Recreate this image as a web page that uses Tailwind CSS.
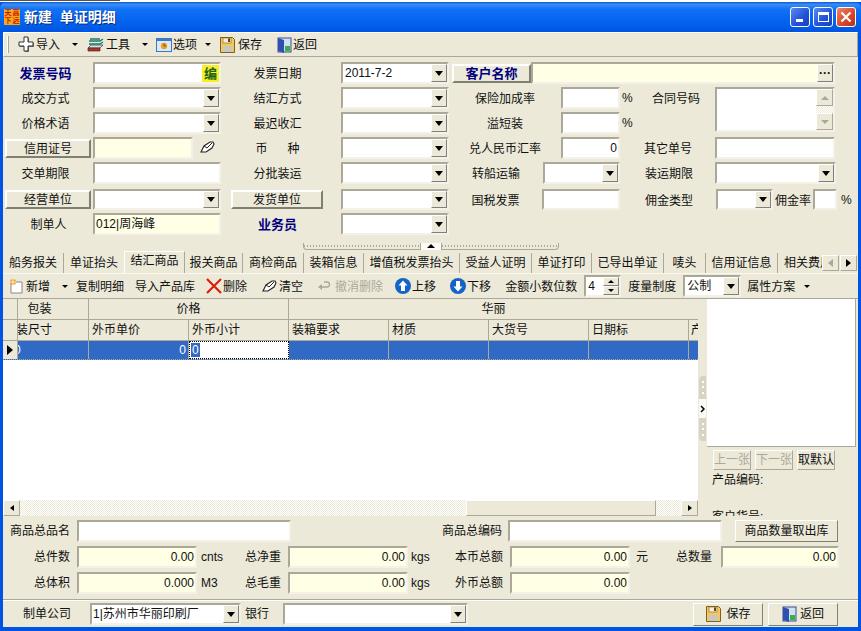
<!DOCTYPE html>
<html lang="en">
<head>
<meta charset="UTF-8" />
<script src="https://cdn.jsdelivr.net/npm/@tailwindcss/browser@4"></script>
</head>
<body class="m-0 bg-white">
<div class="w-[861px] h-[631px] overflow-hidden flex flex-col bg-[#0054e3] font-['Liberation_Sans','Noto_Sans_CJK_SC',sans-serif] text-[12px] leading-[14px] text-[#111]">
  <!-- desktop sliver above the window -->
  <div class="h-[2px] bg-white shrink-0"><div class="w-[120px] h-[1px] bg-[#555]"></div></div>

  <!-- title bar -->
  <div class="h-[30px] shrink-0 rounded-t-[6px] flex items-center pl-[4px] pr-[5px] bg-[linear-gradient(#0a5ad8_0%,#3a8cf5_8%,#1070f5_25%,#0868f0_50%,#0260ea_75%,#0054e3_100%)]">
    <div class="w-[16px] h-[16px] grid grid-cols-2 bg-[#f8a818] text-[#c81808] text-[7px] leading-[8px] text-center font-bold">
      <span>天</span><span>高</span><span>下</span><span>远</span>
    </div>
    <span class="ml-[4px] text-white font-bold text-[14px] [text-shadow:1px_1px_0_#0a2a80] whitespace-pre">新建  单证明细</span>
    <div class="ml-auto flex gap-[3px]">
      <div class="w-[20px] h-[20px] rounded-[3px] border border-white bg-[linear-gradient(135deg,#5a8cf0,#2050d8_60%,#1a40b8)] flex items-end pl-[5px] pb-[4px]"><div class="w-[7px] h-[3px] bg-white"></div></div>
      <div class="w-[20px] h-[20px] rounded-[3px] border border-white bg-[linear-gradient(135deg,#5a8cf0,#2050d8_60%,#1a40b8)] flex items-center justify-center"><div class="w-[11px] h-[10px] border border-t-[3px] border-white"></div></div>
      <div class="w-[20px] h-[20px] rounded-[3px] border border-white bg-[linear-gradient(135deg,#ec8a68,#d8452a_60%,#b83010)] flex items-center justify-center">
        <svg width="12" height="12" viewBox="0 0 12 12"><path d="M1.5 1.5l9 9M10.5 1.5l-9 9" stroke="#fff" stroke-width="2.2"/></svg>
      </div>
    </div>
  </div>

  <div class="flex-1 min-h-0 mx-[3px] bg-[#ece9d8] flex flex-col">
    <!-- main toolbar -->
    <div class="h-[25px] shrink-0 border border-t-white border-l-white border-r-[#aca899] border-b-[#aca899] flex items-center">
      <div class="ml-[3px] w-[2px] h-[17px] border-l border-r border-l-white border-r-[#aca899]"></div>
      <svg class="ml-[9px]" width="17" height="17" viewBox="0 0 17 17"><path d="M7 2h4v5h5v4h-5v5H7v-5H2V7h5z" fill="#777"/><path d="M6 1h4v5h5v4h-5v5H6v-5H1V6h5z" fill="#fff" stroke="#333"/></svg>
      <span class="ml-[1px]">导入</span>
      <div class="ml-[12px] border-x-[3px] border-t-[3px] border-x-transparent border-t-black"></div>
      <svg class="ml-[9px]" width="17" height="17" viewBox="0 0 17 17"><path d="M1 12l3-3h12l-3 3z" fill="#ddd" stroke="#333" stroke-width=".7"/><path d="M1 12h12v3H1z" fill="#b8302a" stroke="#333" stroke-width=".7"/><path d="M2 5h11l3-2M2 8h11l3-2M3 3h10" fill="none" stroke="#1a7a6a" stroke-width="1.300"/></svg>
      <span class="ml-[2px]">工具</span>
      <div class="ml-[12px] border-x-[3px] border-t-[3px] border-x-transparent border-t-black"></div>
      <svg class="ml-[8px]" width="16" height="14" viewBox="0 0 16 14"><rect x=".5" y=".5" width="15" height="13" fill="#dce8f8" stroke="#3a78c8"/><rect x="1" y="1" width="14" height="2" fill="#3a78c8"/><circle cx="8" cy="8" r="3.200" fill="#f0a020"/><path d="M8 5.500v2.500h2" stroke="#805010" fill="none"/></svg>
      <span class="ml-[1px]">选项</span>
      <div class="ml-[8px] border-x-[3px] border-t-[3px] border-x-transparent border-t-black"></div>
      <svg class="ml-[9px]" width="15" height="16" viewBox="0 0 15 16"><path d="M.5.500h12l2 2v13H.5z" fill="#f4c860" stroke="#806020"/><rect x="3" y="1" width="8" height="5" fill="#f8f0d0" stroke="#806020" stroke-width=".6"/><rect x="8" y="1.500" width="2" height="3.500" fill="#604810"/><rect x="3" y="9" width="9" height="6" fill="#c8c8c0"/></svg>
      <span class="ml-[3px]">保存</span>
      <svg class="ml-[15px]" width="15" height="16" viewBox="0 0 15 16"><rect x="1" y="1" width="13" height="14" fill="#cfe0f4" stroke="#34508c"/><path d="M1 1l6 2v13l-6-2z" fill="#3050b0"/><rect x="8" y="9" width="5" height="5" fill="#38b048"/></svg>
      <span class="ml-[1px]">返回</span>
    </div>

    <!-- form -->
    <div class="h-[183px] shrink-0 pt-[5px] flex flex-col">
      <!-- row 1 -->
      <div class="h-[25px] shrink-0 flex items-start">
        <span class="w-[85px] h-[22px] pt-[2px] flex items-center justify-center font-bold text-[13px] text-[#000080]">发票号码</span>
        <div class="ml-[5px] w-[128px] h-[22px] border-2 border-t-[#aca899] border-l-[#aca899] border-r-[#f4f2e8] border-b-[#f4f2e8] bg-white flex justify-end items-center">
          <span class="w-[17px] h-[17px] bg-[#f8f020] text-[13px] font-bold text-center leading-[17px] text-[#206020]">编</span>
        </div>
        <span class="w-[113px] h-[22px] pt-[2px] flex items-center justify-center">发票日期</span>
        <div class="ml-[7px] w-[108px] h-[22px] border-2 border-t-[#aca899] border-l-[#aca899] border-r-[#f4f2e8] border-b-[#f4f2e8] bg-white flex justify-between items-center pl-[2px]">
          2011-7-2
          <div class="w-[16px] h-[18px] border border-t-white border-l-white border-r-[#808080] border-b-[#808080] bg-[#ece9d8] flex items-center justify-center"><div class="border-x-[4px] border-t-[5px] border-x-transparent border-t-black"></div></div>
        </div>
        <div class="ml-[3px] mt-[2px] w-[79px] h-[19px] border-2 border-t-white border-l-white border-r-[#808070] border-b-[#808070] bg-[#ece9d8] flex items-center justify-center font-bold text-[13px] text-[#000080]">客户名称</div>
        <div class="w-[304px] h-[22px] border-2 border-t-[#aca899] border-l-[#aca899] border-r-[#f4f2e8] border-b-[#f4f2e8] bg-[#ffffe6] flex justify-end items-center">
          <div class="w-[16px] h-[18px] border border-t-white border-l-white border-r-[#808080] border-b-[#808080] bg-[#ece9d8] flex items-center justify-center font-bold leading-[8px]">···</div>
        </div>
      </div>
      <!-- row 2 -->
      <div class="h-[25px] shrink-0 flex items-start">
        <span class="w-[85px] h-[22px] pt-[2px] flex items-center justify-center">成交方式</span>
        <div class="ml-[5px] w-[128px] h-[22px] border-2 border-t-[#aca899] border-l-[#aca899] border-r-[#f4f2e8] border-b-[#f4f2e8] bg-white flex justify-end items-center">
          <div class="w-[16px] h-[18px] border border-t-white border-l-white border-r-[#808080] border-b-[#808080] bg-[#ece9d8] flex items-center justify-center"><div class="border-x-[4px] border-t-[5px] border-x-transparent border-t-black"></div></div>
        </div>
        <span class="w-[113px] h-[22px] pt-[2px] flex items-center justify-center">结汇方式</span>
        <div class="ml-[7px] w-[108px] h-[22px] border-2 border-t-[#aca899] border-l-[#aca899] border-r-[#f4f2e8] border-b-[#f4f2e8] bg-white flex justify-end items-center">
          <div class="w-[16px] h-[18px] border border-t-white border-l-white border-r-[#808080] border-b-[#808080] bg-[#ece9d8] flex items-center justify-center"><div class="border-x-[4px] border-t-[5px] border-x-transparent border-t-black"></div></div>
        </div>
        <span class="w-[112px] h-[22px] pt-[2px] flex items-center justify-center">保险加成率</span>
        <div class="w-[59px] h-[22px] border-2 border-t-[#aca899] border-l-[#aca899] border-r-[#f4f2e8] border-b-[#f4f2e8] bg-white"></div>
        <span class="ml-[2px] w-[30px] h-[22px] flex items-center">%</span>
        <span class="w-[48px] h-[22px] pt-[2px] flex items-center justify-center">合同号码</span>
        <!-- memo spans this row and the next -->
        <div class="ml-[15px] w-[120px] h-[45px] border-2 border-t-[#aca899] border-l-[#aca899] border-r-[#f4f2e8] border-b-[#f4f2e8] bg-white flex justify-end">
          <div class="w-[17px] flex flex-col bg-[repeating-conic-gradient(#ece9d8_0_25%,#fff_0_50%)] bg-[length:2px_2px]">
            <div class="h-[17px] border border-t-white border-l-white border-r-[#aca899] border-b-[#aca899] bg-[#ece9d8] flex items-center justify-center"><div class="border-x-[4px] border-b-[4px] border-x-transparent border-b-[#aca899]"></div></div>
            <div class="mt-auto h-[17px] border border-t-white border-l-white border-r-[#aca899] border-b-[#aca899] bg-[#ece9d8] flex items-center justify-center"><div class="border-x-[4px] border-t-[4px] border-x-transparent border-t-[#aca899]"></div></div>
          </div>
        </div>
      </div>
      <!-- row 3 -->
      <div class="h-[25px] shrink-0 flex items-start">
        <span class="w-[85px] h-[22px] pt-[2px] flex items-center justify-center">价格术语</span>
        <div class="ml-[5px] w-[128px] h-[22px] border-2 border-t-[#aca899] border-l-[#aca899] border-r-[#f4f2e8] border-b-[#f4f2e8] bg-white flex justify-end items-center">
          <div class="w-[16px] h-[18px] border border-t-white border-l-white border-r-[#808080] border-b-[#808080] bg-[#ece9d8] flex items-center justify-center"><div class="border-x-[4px] border-t-[5px] border-x-transparent border-t-black"></div></div>
        </div>
        <span class="w-[113px] h-[22px] pt-[2px] flex items-center justify-center">最迟收汇</span>
        <div class="ml-[7px] w-[108px] h-[22px] border-2 border-t-[#aca899] border-l-[#aca899] border-r-[#f4f2e8] border-b-[#f4f2e8] bg-white flex justify-end items-center">
          <div class="w-[16px] h-[18px] border border-t-white border-l-white border-r-[#808080] border-b-[#808080] bg-[#ece9d8] flex items-center justify-center"><div class="border-x-[4px] border-t-[5px] border-x-transparent border-t-black"></div></div>
        </div>
        <span class="w-[112px] h-[22px] pt-[2px] flex items-center justify-center">溢短装</span>
        <div class="w-[59px] h-[22px] border-2 border-t-[#aca899] border-l-[#aca899] border-r-[#f4f2e8] border-b-[#f4f2e8] bg-white"></div>
        <span class="ml-[2px] h-[22px] flex items-center">%</span>
      </div>
      <!-- row 4 -->
      <div class="h-[25px] shrink-0 flex items-start">
        <div class="ml-[2px] mt-[2px] w-[86px] h-[19px] border-2 border-t-white border-l-white border-r-[#808070] border-b-[#808070] bg-[#ece9d8] flex items-center justify-center">信用证号</div>
        <div class="ml-[2px] w-[100px] h-[22px] border-2 border-t-[#aca899] border-l-[#aca899] border-r-[#f4f2e8] border-b-[#f4f2e8] bg-[#ffffe6]"></div>
        <svg class="ml-[7px] mt-[4px]" width="15" height="13" viewBox="0 0 15 13"><path d="M1 11l3-6 6-4h3l1 2-2 4-6 4z" fill="#fff" stroke="#222" stroke-width="1.100"/><path d="M4 5l3 2 5-5" fill="none" stroke="#222"/></svg>
        <span class="ml-[6px] w-[113px] h-[22px] pt-[2px] flex items-center justify-center whitespace-pre">币      种</span>
        <div class="ml-[7px] w-[108px] h-[22px] border-2 border-t-[#aca899] border-l-[#aca899] border-r-[#f4f2e8] border-b-[#f4f2e8] bg-white flex justify-end items-center">
          <div class="w-[16px] h-[18px] border border-t-white border-l-white border-r-[#808080] border-b-[#808080] bg-[#ece9d8] flex items-center justify-center"><div class="border-x-[4px] border-t-[5px] border-x-transparent border-t-black"></div></div>
        </div>
        <span class="w-[112px] h-[22px] pt-[2px] flex items-center justify-center">兑人民币汇率</span>
        <div class="w-[59px] h-[22px] border-2 border-t-[#aca899] border-l-[#aca899] border-r-[#f4f2e8] border-b-[#f4f2e8] bg-white flex items-center justify-end pr-[1px]">0</div>
        <span class="ml-[24px] w-[48px] h-[22px] pt-[2px] flex items-center justify-center">其它单号</span>
        <div class="ml-[23px] w-[120px] h-[22px] border-2 border-t-[#aca899] border-l-[#aca899] border-r-[#f4f2e8] border-b-[#f4f2e8] bg-white"></div>
      </div>
      <!-- row 5 -->
      <div class="h-[27px] shrink-0 flex items-start">
        <span class="w-[85px] h-[22px] pt-[2px] flex items-center justify-center">交单期限</span>
        <div class="ml-[5px] w-[128px] h-[22px] border-2 border-t-[#aca899] border-l-[#aca899] border-r-[#f4f2e8] border-b-[#f4f2e8] bg-white"></div>
        <span class="w-[113px] h-[22px] pt-[2px] flex items-center justify-center">分批装运</span>
        <div class="ml-[7px] w-[108px] h-[22px] border-2 border-t-[#aca899] border-l-[#aca899] border-r-[#f4f2e8] border-b-[#f4f2e8] bg-white flex justify-end items-center">
          <div class="w-[16px] h-[18px] border border-t-white border-l-white border-r-[#808080] border-b-[#808080] bg-[#ece9d8] flex items-center justify-center"><div class="border-x-[4px] border-t-[5px] border-x-transparent border-t-black"></div></div>
        </div>
        <span class="w-[94px] h-[22px] pt-[2px] flex items-center justify-center">转船运输</span>
        <div class="w-[77px] h-[22px] border-2 border-t-[#aca899] border-l-[#aca899] border-r-[#f4f2e8] border-b-[#f4f2e8] bg-white flex justify-end items-center">
          <div class="w-[16px] h-[18px] border border-t-white border-l-white border-r-[#808080] border-b-[#808080] bg-[#ece9d8] flex items-center justify-center"><div class="border-x-[4px] border-t-[5px] border-x-transparent border-t-black"></div></div>
        </div>
        <span class="ml-[25px] w-[48px] h-[22px] pt-[2px] flex items-center justify-center">装运期限</span>
        <div class="ml-[22px] w-[121px] h-[22px] border-2 border-t-[#aca899] border-l-[#aca899] border-r-[#f4f2e8] border-b-[#f4f2e8] bg-white flex justify-end items-center">
          <div class="w-[16px] h-[18px] border border-t-white border-l-white border-r-[#808080] border-b-[#808080] bg-[#ece9d8] flex items-center justify-center"><div class="border-x-[4px] border-t-[5px] border-x-transparent border-t-black"></div></div>
        </div>
      </div>
      <!-- row 6 -->
      <div class="h-[24px] shrink-0 flex items-start">
        <div class="ml-[2px] mt-[1px] w-[86px] h-[19px] border-2 border-t-white border-l-white border-r-[#808070] border-b-[#808070] bg-[#ece9d8] flex items-center justify-center">经营单位</div>
        <div class="ml-[2px] w-[128px] h-[21px] border-2 border-t-[#aca899] border-l-[#aca899] border-r-[#f4f2e8] border-b-[#f4f2e8] bg-white flex justify-end items-center">
          <div class="w-[16px] h-[17px] border border-t-white border-l-white border-r-[#808080] border-b-[#808080] bg-[#ece9d8] flex items-center justify-center"><div class="border-x-[4px] border-t-[5px] border-x-transparent border-t-black"></div></div>
        </div>
        <div class="ml-[10px] mt-[1px] w-[92px] h-[19px] border-2 border-t-white border-l-white border-r-[#808070] border-b-[#808070] bg-[#ece9d8] flex items-center justify-center">发货单位</div>
        <div class="ml-[18px] w-[108px] h-[21px] border-2 border-t-[#aca899] border-l-[#aca899] border-r-[#f4f2e8] border-b-[#f4f2e8] bg-white flex justify-end items-center">
          <div class="w-[16px] h-[17px] border border-t-white border-l-white border-r-[#808080] border-b-[#808080] bg-[#ece9d8] flex items-center justify-center"><div class="border-x-[4px] border-t-[5px] border-x-transparent border-t-black"></div></div>
        </div>
        <span class="w-[93px] h-[21px] pt-[2px] flex items-center justify-center">国税发票</span>
        <div class="w-[78px] h-[21px] border-2 border-t-[#aca899] border-l-[#aca899] border-r-[#f4f2e8] border-b-[#f4f2e8] bg-white"></div>
        <span class="ml-[25px] w-[48px] h-[21px] pt-[2px] flex items-center justify-center">佣金类型</span>
        <div class="ml-[23px] w-[57px] h-[21px] border-2 border-t-[#aca899] border-l-[#aca899] border-r-[#f4f2e8] border-b-[#f4f2e8] bg-white flex justify-end items-center">
          <div class="w-[16px] h-[17px] border border-t-white border-l-white border-r-[#808080] border-b-[#808080] bg-[#ece9d8] flex items-center justify-center"><div class="border-x-[4px] border-t-[5px] border-x-transparent border-t-black"></div></div>
        </div>
        <span class="ml-[2px] w-[38px] h-[21px] pt-[2px] flex items-center">佣金率</span>
        <div class="w-[24px] h-[21px] border-2 border-t-[#aca899] border-l-[#aca899] border-r-[#f4f2e8] border-b-[#f4f2e8] bg-white"></div>
        <span class="ml-[4px] h-[21px] flex items-center">%</span>
      </div>
      <!-- row 7 -->
      <div class="h-[22px] shrink-0 flex items-start">
        <span class="ml-[6px] w-[79px] h-[22px] pt-[2px] flex items-center justify-center">制单人</span>
        <div class="ml-[5px] w-[128px] h-[22px] border-2 border-t-[#aca899] border-l-[#aca899] border-r-[#f4f2e8] border-b-[#f4f2e8] bg-[#ffffe6] flex items-center pl-[1px]">012|周海峰</div>
        <span class="w-[113px] h-[22px] pt-[2px] flex items-center justify-center font-bold text-[13px] text-[#000080]">业务员</span>
        <div class="ml-[7px] w-[108px] h-[22px] border-2 border-t-[#aca899] border-l-[#aca899] border-r-[#f4f2e8] border-b-[#f4f2e8] bg-white flex justify-end items-center">
          <div class="w-[16px] h-[18px] border border-t-white border-l-white border-r-[#808080] border-b-[#808080] bg-[#ece9d8] flex items-center justify-center"><div class="border-x-[4px] border-t-[5px] border-x-transparent border-t-black"></div></div>
        </div>
      </div>
    </div>

    <!-- horizontal splitter -->
    <div class="h-[10px] shrink-0 flex justify-center items-center pt-[2px]">
      <div class="w-[118px] h-[7px] border border-t-0 border-[#aca899] rounded-bl-[4px] bg-[repeating-linear-gradient(90deg,#aca899_0_1px,#ece9d8_1px_3px)] bg-no-repeat bg-[length:100%_2px] bg-center"></div>
      <div class="w-[20px] h-[7px] flex items-center justify-center bg-[#fbfaf6]"><div class="border-x-[4px] border-b-[4px] border-x-transparent border-b-black"></div></div>
      <div class="w-[118px] h-[7px] border border-t-0 border-[#aca899] rounded-br-[4px] bg-[repeating-linear-gradient(90deg,#aca899_0_1px,#ece9d8_1px_3px)] bg-no-repeat bg-[length:100%_2px] bg-center"></div>
    </div>

    <!-- tabs -->
    <div class="h-[24px] shrink-0 pt-[2px] flex items-end border-b border-[#f8f7f0] text-[#111]">
      <span class="w-[61px] h-[20px] flex items-center justify-center border-r border-[#aca899]">船务报关</span>
      <span class="w-[60px] h-[20px] flex items-center justify-center">单证抬头</span>
      <span class="w-[61px] h-[22px] pb-[3px] flex items-center justify-center bg-[#ece9d8] border-t border-l border-t-white border-l-white border-r border-r-[#aca899]">结汇商品</span>
      <span class="w-[58px] h-[20px] flex items-center justify-center border-r border-[#aca899]">报关商品</span>
      <span class="w-[61px] h-[20px] flex items-center justify-center border-r border-[#aca899]">商检商品</span>
      <span class="w-[60px] h-[20px] flex items-center justify-center border-r border-[#aca899]">装箱信息</span>
      <span class="w-[96px] h-[20px] flex items-center justify-center border-r border-[#aca899]">增值税发票抬头</span>
      <span class="w-[72px] h-[20px] flex items-center justify-center border-r border-[#aca899]">受益人证明</span>
      <span class="w-[60px] h-[20px] flex items-center justify-center border-r border-[#aca899]">单证打印</span>
      <span class="w-[72px] h-[20px] flex items-center justify-center border-r border-[#aca899]">已导出单证</span>
      <span class="w-[42px] h-[20px] flex items-center justify-center border-r border-[#aca899]">唛头</span>
      <span class="w-[72px] h-[20px] flex items-center justify-center border-r border-[#aca899]">信用证信息</span>
      <span class="w-[44px] h-[20px] overflow-hidden flex items-center justify-start pl-[6px] whitespace-nowrap">相关费用</span>
      <div class="w-[36px] h-[20px] flex items-center bg-[#ece9d8]">
        <div class="w-[17px] h-[16px] border border-t-white border-l-white border-r-[#aca899] border-b-[#aca899] flex items-center justify-center"><div class="border-y-[4px] border-r-[5px] border-y-transparent border-r-[#aca899]"></div></div>
        <div class="ml-[1px] w-[17px] h-[16px] border border-t-white border-l-white border-r-[#aca899] border-b-[#aca899] flex items-center justify-center"><div class="border-y-[4px] border-l-[5px] border-y-transparent border-l-black"></div></div>
      </div>
    </div>

    <!-- grid toolbar -->
    <div class="h-[24px] shrink-0 flex items-center pl-[6px] whitespace-nowrap">
      <svg width="15" height="16" viewBox="0 0 15 16"><path d="M2 4h11v11H2z" fill="#fff" stroke="#888"/><circle cx="4" cy="4" r="3" fill="#f0a030"/><path d="M4 1v6M1 4h6" stroke="#fff" stroke-width=".8"/></svg>
      <span class="ml-[2px] mt-[2px]">新增</span>
      <div class="ml-[12px] border-x-[3px] border-t-[3px] border-x-transparent border-t-black"></div>
      <span class="ml-[8px] mt-[2px]">复制明细</span>
      <span class="ml-[11px] mt-[2px]">导入产品库</span>
      <svg class="ml-[11px]" width="16" height="16" viewBox="0 0 16 16"><path d="M1 1l14 14M15 1L1 15" stroke="#d82010" stroke-width="2.200"/></svg>
      <span class="ml-[1px] mt-[2px]">删除</span>
      <svg class="ml-[15px]" width="15" height="13" viewBox="0 0 15 13"><path d="M1 11l3-6 6-4h3l1 2-2 4-6 4z" fill="#fff" stroke="#222" stroke-width="1.100"/><path d="M4 5l3 2 5-5" fill="none" stroke="#222"/></svg>
      <span class="ml-[2px] mt-[2px]">清空</span>
      <svg class="ml-[15px]" width="13" height="10" viewBox="0 0 13 10"><path d="M3 6h6a2.500 2.500 0 0 0 0-5H6" fill="none" stroke="#aca899" stroke-width="1.300"/><path d="M0 6l4-3v6z" fill="#aca899"/></svg>
      <span class="ml-[4px] mt-[2px] text-[#aca899]">撤消删除</span>
      <svg class="ml-[12px]" width="16" height="16" viewBox="0 0 16 16"><circle cx="8" cy="8" r="8" fill="#1464c8"/><path d="M8 2.500l4.500 5H10V13H6V7.500H3.500z" fill="#fff"/></svg>
      <span class="ml-[1px] mt-[2px]">上移</span>
      <svg class="ml-[14px]" width="16" height="16" viewBox="0 0 16 16"><circle cx="8" cy="8" r="8" fill="#1464c8"/><path d="M8 13.500l4.500-5H10V3H6v5.500H3.500z" fill="#fff"/></svg>
      <span class="ml-[1px] mt-[2px]">下移</span>
      <span class="ml-[14px] mt-[2px]">金额小数位数</span>
      <div class="ml-[7px] w-[37px] h-[22px] border-2 border-t-[#aca899] border-l-[#aca899] border-r-[#f4f2e8] border-b-[#f4f2e8] bg-white flex items-center justify-between pl-[2px]">
        4
        <div class="w-[16px] h-[18px] flex flex-col">
          <div class="h-[9px] border border-t-white border-l-white border-r-[#808080] border-b-[#808080] bg-[#ece9d8] flex items-center justify-center"><div class="border-x-[3px] border-b-[3px] border-x-transparent border-b-black"></div></div>
          <div class="h-[9px] border border-t-white border-l-white border-r-[#808080] border-b-[#808080] bg-[#ece9d8] flex items-center justify-center"><div class="border-x-[3px] border-t-[3px] border-x-transparent border-t-black"></div></div>
        </div>
      </div>
      <span class="ml-[7px] mt-[2px]">度量制度</span>
      <div class="ml-[7px] w-[58px] h-[22px] border-2 border-t-[#aca899] border-l-[#aca899] border-r-[#f4f2e8] border-b-[#f4f2e8] bg-white flex items-center justify-between pl-[2px]">
        公制
        <div class="w-[16px] h-[18px] border border-t-white border-l-white border-r-[#808080] border-b-[#808080] bg-[#ece9d8] flex items-center justify-center"><div class="border-x-[4px] border-t-[5px] border-x-transparent border-t-black"></div></div>
      </div>
      <span class="ml-[6px] mt-[2px]">属性方案</span>
      <div class="ml-[9px] border-x-[3px] border-t-[3px] border-x-transparent border-t-black"></div>
    </div>

    <!-- grid + picture panel -->
    <div class="h-[218px] shrink-0 flex border-t border-[#aca899] overflow-hidden">
      <div class="w-[695px] flex flex-col bg-white">
        <div class="flex-1 min-h-0 flex flex-col overflow-hidden">
          <!-- band headers -->
          <div class="h-[21px] shrink-0 flex bg-[#ece9d8] border-b border-[#aca899]">
            <div class="w-[15px] border-r border-[#aca899]"></div>
            <div class="w-[71px] border-r border-[#aca899] flex items-center justify-center pr-[27px]">包装</div>
            <div class="w-[200px] border-r border-[#aca899] flex items-center justify-center">价格</div>
            <div class="flex-1 flex items-center justify-center">华丽</div>
          </div>
          <!-- column headers -->
          <div class="h-[21px] shrink-0 flex bg-[#ece9d8] border-b border-[#aca899] overflow-hidden whitespace-nowrap">
            <div class="w-[15px] border-r border-[#aca899]"></div>
            <div class="w-[71px] border-r border-[#aca899] flex items-center overflow-hidden"><span class="ml-[-2px]">装尺寸</span></div>
            <div class="w-[100px] border-r border-[#aca899] flex items-center pl-[3px]">外币单价</div>
            <div class="w-[100px] border-r border-[#aca899] flex items-center pl-[3px]">外币小计</div>
            <div class="w-[100px] border-r border-[#aca899] flex items-center pl-[3px]">装箱要求</div>
            <div class="w-[100px] border-r border-[#aca899] flex items-center pl-[3px]">材质</div>
            <div class="w-[100px] border-r border-[#aca899] flex items-center pl-[3px]">大货号</div>
            <div class="w-[100px] border-r border-[#aca899] flex items-center pl-[3px]">日期标</div>
            <div class="flex-1 min-w-0 flex items-center pl-[2px] overflow-hidden">产品</div>
          </div>
          <!-- selected row -->
          <div class="h-[19px] shrink-0 flex bg-[#316ac5] text-white border-b border-dotted border-[#aca899]">
            <div class="w-[15px] bg-[#ece9d8] border-r border-[#aca899] flex items-center justify-center"><div class="border-y-[5px] border-l-[6px] border-y-transparent border-l-black"></div></div>
            <div class="w-[71px] border-r border-[#aca899] flex items-center overflow-hidden"><span class="ml-[-4px]">0</span></div>
            <div class="w-[100px] border-r border-[#aca899] flex items-center justify-end pr-[2px]">0</div>
            <div class="w-[100px] border border-dotted border-black bg-white flex items-center pl-[1px]"><span class="bg-[#316ac5] text-white px-[1px]">0</span></div>
            <div class="w-[100px] border-r border-[#aca899]"></div>
            <div class="w-[100px] border-r border-[#aca899]"></div>
            <div class="w-[100px] border-r border-[#aca899]"></div>
            <div class="w-[100px] border-r border-[#aca899]"></div>
            <div class="flex-1"></div>
          </div>
        </div>
        <!-- horizontal scrollbar -->
        <div class="h-[16px] shrink-0 flex bg-[repeating-conic-gradient(#ece9d8_0_25%,#fff_0_50%)] bg-[length:2px_2px]">
          <div class="w-[17px] border border-t-white border-l-white border-r-[#aca899] border-b-[#aca899] bg-[#ece9d8] flex items-center justify-center"><div class="border-y-[3px] border-r-[4px] border-y-transparent border-r-black"></div></div>
          <div class="ml-[446px] w-[190px] border border-t-white border-l-white border-r-[#aca899] border-b-[#aca899] bg-[#ece9d8]"></div>
          <div class="ml-auto w-[17px] border border-t-white border-l-white border-r-[#aca899] border-b-[#aca899] bg-[#ece9d8] flex items-center justify-center"><div class="border-y-[3px] border-l-[4px] border-y-transparent border-l-black"></div></div>
        </div>
      </div>

      <!-- vertical splitter -->
      <div class="w-[9px] shrink-0 flex flex-col items-center pt-[77px]">
        <div class="w-[7px] h-[23px] rounded-tl-[4px] bg-[#d8d4c4] flex flex-col items-center justify-around py-[3px]"><i class="w-[2px] h-[2px] bg-[#fff]"></i><i class="w-[2px] h-[2px] bg-[#fff]"></i><i class="w-[2px] h-[2px] bg-[#fff]"></i></div>
        <div class="w-[7px] h-[19px] bg-[#fbfaf6] flex items-center justify-center">
          <svg width="5" height="8" viewBox="0 0 5 8"><path d="M1 1l3 3-3 3" fill="none" stroke="#000" stroke-width="1.500"/></svg>
        </div>
        <div class="w-[7px] h-[23px] rounded-bl-[4px] bg-[#d8d4c4] flex flex-col items-center justify-around py-[3px]"><i class="w-[2px] h-[2px] bg-[#fff]"></i><i class="w-[2px] h-[2px] bg-[#fff]"></i><i class="w-[2px] h-[2px] bg-[#fff]"></i></div>
      </div>

      <!-- picture panel -->
      <div class="flex-1 min-w-0 overflow-hidden pr-[2px]">
        <div class="h-[148px] bg-white border-r border-b border-[#aca899]"></div>
        <div class="mt-[3px] pl-[6px] flex h-[20px] whitespace-nowrap">
          <span class="w-[38px] flex items-center justify-center border border-t-white border-l-white border-r-[#aca899] border-b-[#aca899] text-[#aca899]">上一张</span>
          <span class="ml-[4px] w-[38px] flex items-center justify-center border border-t-white border-l-white border-r-[#aca899] border-b-[#aca899] text-[#aca899]">下一张</span>
          <span class="ml-[4px] w-[38px] flex items-center justify-center border border-t-white border-l-white border-r-[#aca899] border-b-[#aca899]">取默认</span>
        </div>
        <div class="mt-[3px] pl-[5px]">产品编码:</div>
        <div class="mt-[23px] pl-[5px]">客户货号:</div>
      </div>
    </div>

    <!-- totals -->
    <div class="h-[84px] shrink-0 pt-[4px] flex flex-col border-b border-[#aca899]">
      <div class="h-[26px] shrink-0 flex items-start">
        <span class="w-[67px] h-[22px] flex items-center justify-end">商品总品名</span>
        <div class="ml-[7px] w-[214px] h-[22px] border-2 border-t-[#aca899] border-l-[#aca899] border-r-[#f4f2e8] border-b-[#f4f2e8] bg-white"></div>
        <span class="w-[211px] h-[22px] flex items-center justify-end">商品总编码</span>
        <div class="ml-[6px] w-[214px] h-[22px] border-2 border-t-[#aca899] border-l-[#aca899] border-r-[#f4f2e8] border-b-[#f4f2e8] bg-white"></div>
        <div class="ml-[13px] w-[103px] h-[22px] border border-t-white border-l-white border-r-[#808070] border-b-[#808070] flex items-center justify-center">商品数量取出库</div>
      </div>
      <div class="h-[26px] shrink-0 flex items-start">
        <span class="w-[67px] h-[22px] flex items-center justify-end">总件数</span>
        <div class="ml-[7px] w-[120px] h-[22px] border-2 border-t-[#aca899] border-l-[#aca899] border-r-[#f4f2e8] border-b-[#f4f2e8] bg-[#ffffe6] flex items-center justify-end pr-[1px]">0.00</div>
        <span class="ml-[4px] w-[40px] h-[22px] flex items-center">cnts</span>
        <span class="w-[40px] h-[22px] flex items-center justify-end">总净重</span>
        <div class="ml-[7px] w-[120px] h-[22px] border-2 border-t-[#aca899] border-l-[#aca899] border-r-[#f4f2e8] border-b-[#f4f2e8] bg-[#ffffe6] flex items-center justify-end pr-[1px]">0.00</div>
        <span class="ml-[3px] w-[92px] h-[22px] flex items-center">kgs</span>
        <span class="h-[22px] flex items-center w-[0px] justify-end whitespace-nowrap">本币总额</span>
        <div class="ml-[7px] w-[120px] h-[22px] border-2 border-t-[#aca899] border-l-[#aca899] border-r-[#f4f2e8] border-b-[#f4f2e8] bg-[#ffffe6] flex items-center justify-end pr-[1px]">0.00</div>
        <span class="ml-[6px] w-[76px] h-[22px] flex items-center">元</span>
        <span class="h-[22px] flex items-center w-[0px] justify-end whitespace-nowrap">总数量</span>
        <div class="ml-[9px] w-[118px] h-[22px] border-2 border-t-[#aca899] border-l-[#aca899] border-r-[#f4f2e8] border-b-[#f4f2e8] bg-[#ffffe6] flex items-center justify-end pr-[1px]">0.00</div>
      </div>
      <div class="h-[22px] shrink-0 flex items-start">
        <span class="w-[67px] h-[22px] flex items-center justify-end">总体积</span>
        <div class="ml-[7px] w-[120px] h-[22px] border-2 border-t-[#aca899] border-l-[#aca899] border-r-[#f4f2e8] border-b-[#f4f2e8] bg-[#ffffe6] flex items-center justify-end pr-[1px]">0.000</div>
        <span class="ml-[4px] w-[40px] h-[22px] flex items-center">M3</span>
        <span class="w-[40px] h-[22px] flex items-center justify-end">总毛重</span>
        <div class="ml-[7px] w-[120px] h-[22px] border-2 border-t-[#aca899] border-l-[#aca899] border-r-[#f4f2e8] border-b-[#f4f2e8] bg-[#ffffe6] flex items-center justify-end pr-[1px]">0.00</div>
        <span class="ml-[3px] w-[92px] h-[22px] flex items-center">kgs</span>
        <span class="h-[22px] flex items-center w-[0px] justify-end whitespace-nowrap">外币总额</span>
        <div class="ml-[7px] w-[120px] h-[22px] border-2 border-t-[#aca899] border-l-[#aca899] border-r-[#f4f2e8] border-b-[#f4f2e8] bg-[#ffffe6] flex items-center justify-end pr-[1px]">0.00</div>
      </div>
    </div>

    <!-- footer -->
    <div class="flex-1 min-h-0 flex items-center border-t border-white">
      <span class="ml-[20px] w-[48px] flex justify-center">制单公司</span>
      <div class="ml-[19px] w-[151px] h-[22px] border-2 border-t-[#aca899] border-l-[#aca899] border-r-[#f4f2e8] border-b-[#f4f2e8] bg-white flex items-center justify-between pl-[1px]">
        1|苏州市华丽印刷厂
        <div class="w-[16px] h-[18px] border border-t-white border-l-white border-r-[#808080] border-b-[#808080] bg-[#ece9d8] flex items-center justify-center"><div class="border-x-[4px] border-t-[5px] border-x-transparent border-t-black"></div></div>
      </div>
      <span class="ml-[4px]">银行</span>
      <div class="ml-[14px] w-[185px] h-[22px] border-2 border-t-[#aca899] border-l-[#aca899] border-r-[#f4f2e8] border-b-[#f4f2e8] bg-white flex items-center justify-end">
        <div class="w-[16px] h-[18px] border border-t-white border-l-white border-r-[#808080] border-b-[#808080] bg-[#ece9d8] flex items-center justify-center"><div class="border-x-[4px] border-t-[5px] border-x-transparent border-t-black"></div></div>
      </div>
      <div class="ml-[225px] w-[70px] h-[23px] border border-t-white border-l-white border-r-[#808070] border-b-[#808070] flex items-center justify-center">
        <svg width="15" height="16" viewBox="0 0 15 16"><path d="M.5.500h12l2 2v13H.5z" fill="#f4c860" stroke="#806020"/><rect x="3" y="1" width="8" height="5" fill="#f8f0d0" stroke="#806020" stroke-width=".6"/><rect x="8" y="1.500" width="2" height="3.500" fill="#604810"/><rect x="3" y="9" width="9" height="6" fill="#c8c8c0"/></svg>
        <span class="ml-[6px]">保存</span>
      </div>
      <div class="ml-[5px] w-[70px] h-[23px] border border-t-white border-l-white border-r-[#808070] border-b-[#808070] flex items-center justify-center">
        <svg width="15" height="16" viewBox="0 0 15 16"><rect x="1" y="1" width="13" height="14" fill="#cfe0f4" stroke="#34508c"/><path d="M1 1l6 2v13l-6-2z" fill="#3050b0"/><rect x="8" y="9" width="5" height="5" fill="#38b048"/></svg>
        <span class="ml-[3px]">返回</span>
      </div>
    </div>
  </div>
  <div class="h-[4px] shrink-0"></div>
</div>
</body>
</html>
